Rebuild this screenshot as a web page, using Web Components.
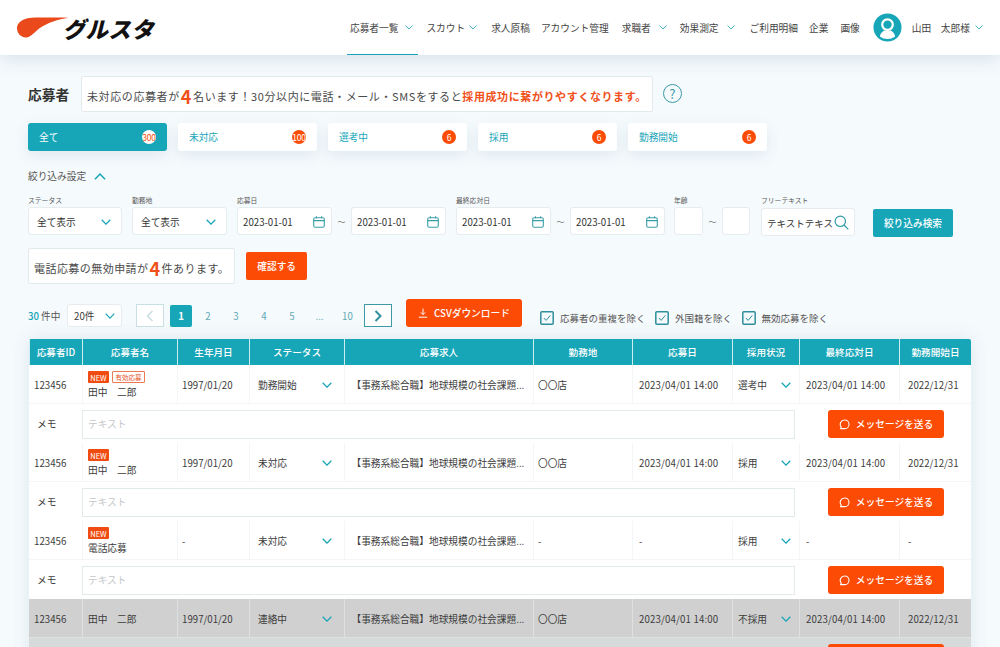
<!DOCTYPE html>
<html lang="ja">
<head>
<meta charset="utf-8">
<title>応募者</title>
<style>
  html, body { margin: 0; height: 647px; overflow: hidden; }
  body {
    background: #f5fafc;
    color: #3c3c3c;
    font-family: "Noto Sans CJK JP", "Noto Sans", sans-serif;
  }
</style>
</head>
<body>
<app-header></app-header>
<applicant-page></applicant-page>

<script>
const TEAL = "#17a5b8";
const ORANGE = "#fb4b05";

const ICONS = {
  chevronDown: (w = 10, sw = 1.4) => `<svg width="${w}" height="${w * 0.6}" viewBox="0 0 10 6" fill="none" stroke="${TEAL}" stroke-width="${sw}" style="flex:none"><path d="M.7.7 5 5.1 9.3.7"/></svg>`,
  chevronUp: () => `<svg width="12" height="7" viewBox="0 0 10 6" fill="none" stroke="${TEAL}" stroke-width="1.3"><path d="M.7 5.3 5 .9l4.3 4.4"/></svg>`,
  calendar: () => `<svg width="12" height="12" viewBox="0 0 12 12" fill="none" stroke="#3a9fa8" stroke-width="1.1" style="flex:none"><rect x=".7" y="1.7" width="10.6" height="9.6" rx="1.6"/><path d="M.7 4.6h10.6M3.4.3v2M8.6.3v2"/></svg>`,
  search: () => `<svg width="15" height="15" viewBox="0 0 15 15" fill="none" stroke="#2f9aa3" stroke-width="1.2" style="flex:none"><circle cx="6.3" cy="6.3" r="5.2"/><path d="m10 10 4.3 4.3"/></svg>`,
  message: () => `<svg width="11" height="11" viewBox="0 0 11 11" fill="none" stroke="#fff" stroke-width="1.1"><path d="M5.6 1a4.3 4.3 0 0 1 .2 8.6H1.6l.7-1.5A4.3 4.3 0 0 1 5.6 1Z"/></svg>`,
  download: () => `<svg width="10" height="10" viewBox="0 0 10 10" fill="none" stroke="#fff" stroke-width="1"><path d="M5 .6v5.8M2.8 4.4 5 6.6l2.2-2.2M.8 9.2h8.4"/></svg>`,
  check: () => `<svg width="14" height="14" viewBox="0 0 14 14" fill="none" style="flex:none"><rect x=".8" y=".8" width="12.4" height="12.4" rx="1" stroke="#2f8f9c" stroke-width="1.5"/><path d="m3.8 7 2.3 2.4 4.2-5" stroke="#2f8f9c" stroke-width="1"/></svg>`,
  avatar: () => `<svg width="29" height="29" viewBox="0 0 29 29"><circle cx="14.5" cy="14.5" r="14" fill="${TEAL}"/><circle cx="14.5" cy="11.6" r="5.3" fill="none" stroke="#fff" stroke-width="2.2"/><path d="M6.8 23.4c.7-3.8 3.3-5.8 5.2-6 1.5.8 3.6.8 5 0 2 .2 4.5 2.2 5.2 6a13 13 0 0 1-15.4 0Z" fill="#fff"/></svg>`,
};

class NavItem extends HTMLElement {
  connectedCallback() {
    if (this.shadowRoot) return;
    const chev = this.hasAttribute("chevron");
    const root = this.attachShadow({ mode: "open" });
    root.innerHTML = `
      <style>
        :host { display: inline-flex; align-items: center; height: 55px; gap: var(--chev-gap, 8px); font-size: 9.7px; white-space: nowrap; color: #444; position: relative; }
        :host([active])::after { content: ""; position: absolute; left: -3px; right: -5px; bottom: 0; height: 1.5px; background: ${TEAL}; }
      </style>
      <slot></slot>${chev ? ICONS.chevronDown(8, 1) : ""}`;
  }
}

class AppHeader extends HTMLElement {
  connectedCallback() {
    if (this.shadowRoot) return;
    const root = this.attachShadow({ mode: "open" });
    root.innerHTML = `
      <style>
        :host { display: flex; align-items: center; height: 55px; background: #fff; box-shadow: 0 4px 18px rgba(70,110,150,.16); position: relative; padding-left: 17px; }
        .logo { display: flex; align-items: center; width: 333px; position: relative; height: 55px; }
        .logo svg { margin-top: 1px; }
        .word { font-size: 22.5px; font-weight: 900; color: #111; transform: skewX(-14deg); margin-left: -4px; margin-top: 2px; line-height: 1; white-space: nowrap; letter-spacing: .4px; }
        nav { display: flex; align-items: center; }
        .user { display: flex; align-items: center; font-size: 9.7px; color: #444; white-space: nowrap; }
        .user svg:first-child { margin-right: 10px; }
        .user svg:last-child { margin-left: 5px; }
      </style>
      <div class="logo">
        <svg width="52" height="22" viewBox="0 0 52 22"><path d="M51.5.8C40 .6 24 .5 15 .7 6 1 0 5.5 0 11c0 6 5 10 9.5 9.5 4-.5 7-4.5 13-9.3C31 5.5 41 2.6 51.5.8Z" fill="#e9491b"/></svg>
        <span class="word">グルスタ</span>
      </div>
      <nav>
        <nav-item active chevron style="--chev-gap:7px;margin-right:13px">応募者一覧</nav-item>
        <nav-item chevron style="--chev-gap:4px;margin-right:14px">スカウト</nav-item>
        <nav-item style="margin-right:11px">求人原稿</nav-item>
        <nav-item style="margin-right:13px">アカウント管理</nav-item>
        <nav-item chevron style="margin-right:13px">求職者</nav-item>
        <nav-item chevron style="margin-right:15px">効果測定</nav-item>
        <nav-item style="margin-right:11px">ご利用明細</nav-item>
        <nav-item style="margin-right:12px">企業</nav-item>
        <nav-item style="margin-right:13px">画像</nav-item>
      </nav>
      <div class="user">${ICONS.avatar()}山田　太郎様${ICONS.chevronDown(8, 1)}</div>`;
  }
}

class NoticeBox extends HTMLElement {
  connectedCallback() {
    if (this.shadowRoot) return;
    const root = this.attachShadow({ mode: "open" });
    root.innerHTML = `
      <style>
        :host { display: inline-flex; align-items: center; height: 36px; box-sizing: border-box; padding: 3px 5px 0; background: #fff; border: 1px solid #e3eaee; border-radius: 2px; font-size: 11px; letter-spacing: var(--track, .45px); white-space: nowrap; color: #4a4a4a; }
      </style>
      <slot></slot>`;
  }
}

class StatusTab extends HTMLElement {
  connectedCallback() {
    if (this.shadowRoot) return;
    const root = this.attachShadow({ mode: "open" });
    root.innerHTML = `
      <style>
        :host { display: flex; align-items: center; justify-content: space-between; width: 139px; height: 28px; box-sizing: border-box; padding: 0 11px; border-radius: 3px; background: #fff; color: ${TEAL}; font-size: 9.7px; box-shadow: 0 5px 14px rgba(90,130,170,.13); }
        :host([active]) { background: ${TEAL}; color: #fff; }
        .count { display: flex; align-items: center; justify-content: center; width: 14px; height: 14px; border-radius: 50%; background: ${ORANGE}; color: #fff; font-size: 8.5px; letter-spacing: -.3px; overflow: hidden; white-space: nowrap; }
        :host([active]) .count { background: #fff; color: ${ORANGE}; }
      </style>
      <slot></slot><span class="count">${this.getAttribute("count")}</span>`;
  }
}

class FilterBox extends HTMLElement {
  connectedCallback() {
    if (this.shadowRoot) return;
    const type = this.getAttribute("type") || "empty";
    const icon = { select: ICONS.chevronDown(10, 1.3), date: ICONS.calendar(), search: ICONS.search(), empty: "" }[type];
    const root = this.attachShadow({ mode: "open" });
    root.innerHTML = `
      <style>
        :host { display: flex; flex-direction: column; width: var(--w, 95px); flex: none; }
        label { height: 14px; font-size: 6.8px; line-height: 14px; color: #555; white-space: nowrap; }
        .box { display: flex; align-items: center; justify-content: space-between; height: 28px; box-sizing: border-box; background: #fff; border: 1px solid #e6ecef; border-radius: 3px; font-size: 9.7px; color: #333; white-space: nowrap; overflow: hidden; padding: 1px 6px 0 5px; }
        :host([type="select"]) .box { padding-left: 8px; padding-right: 10px; }
        :host([type="search"]) .box { padding: 1px 5px 0 5px; margin-top: 1px; font-size: 9.5px; }
        :host([type="search"]) .box span { overflow: hidden; }
      </style>
      <label>${this.getAttribute("label") || "&nbsp;"}</label>
      <div class="box"><span><slot></slot></span>${icon}</div>`;
  }
}

class RangeSep extends HTMLElement {
  connectedCallback() {
    if (this.shadowRoot) return;
    const root = this.attachShadow({ mode: "open" });
    root.innerHTML = `
      <style>:host { display: flex; align-items: center; justify-content: center; width: 19px; height: 28px; margin-top: 14px; font-size: 8px; color: #777; flex: none; }</style>～`;
  }
}

class FilterBar extends HTMLElement {
  connectedCallback() {
    if (this.shadowRoot) return;
    const root = this.attachShadow({ mode: "open" });
    root.innerHTML = `
      <style>
        :host { display: flex; align-items: flex-start; margin-top: 10px; }
        .group { display: flex; margin-right: 10px; flex: none; }
        .btn { display: flex; align-items: center; justify-content: center; width: 80px; height: 28px; margin: 16px 0 0 18px; background: ${TEAL}; border-radius: 2px; color: #fff; font-size: 9.7px; font-weight: 500; flex: none; }
      </style>
      <div class="group"><filter-box type="select" label="ステータス" style="--w:94px">全て表示</filter-box></div>
      <div class="group"><filter-box type="select" label="勤務地">全て表示</filter-box></div>
      <div class="group"><filter-box type="date" label="応募日">2023-01-01</filter-box><range-sep></range-sep><filter-box type="date">2023-01-01</filter-box></div>
      <div class="group" style="margin-right:9px"><filter-box type="date" label="最終応対日">2023-01-01</filter-box><range-sep></range-sep><filter-box type="date">2023-01-01</filter-box></div>
      <div class="group" style="margin-right:11px"><filter-box label="年齢" style="--w:29px"></filter-box><range-sep></range-sep><filter-box style="--w:28px"></filter-box></div>
      <filter-box type="search" label="フリーテキスト" style="--w:94px">テキストテキス</filter-box>
      <div class="btn">絞り込み検索</div>`;
  }
}

class PagerBar extends HTMLElement {
  connectedCallback() {
    if (this.shadowRoot) return;
    const root = this.attachShadow({ mode: "open" });
    const pageLink = (t, w) => `<span class="num" style="width:${w}px">${t}</span>`;
    const checks = ["応募者の重複を除く", "外国籍を除く", "無効応募を除く"]
      .map((t) => `<span class="check">${ICONS.check()}<span>${t}</span></span>`).join("");
    root.innerHTML = `
      <style>
        :host { display: flex; align-items: flex-end; height: 28px; margin-top: 15px; font-size: 9.7px; }
        .count { display: flex; align-items: center; height: 23px; width: 39px; white-space: nowrap; color: #555; flex: none; }
        .count b { color: ${TEAL}; font-weight: 500; margin-right: 2px; }
        .sel { display: flex; align-items: center; justify-content: space-between; width: 55px; height: 23px; box-sizing: border-box; padding: 0 6px; background: #fff; border: 1px solid #e6ecef; border-radius: 3px; flex: none; margin-right: 14px; }
        .arrow { display: flex; align-items: center; justify-content: center; width: 28px; height: 23px; box-sizing: border-box; background: #fff; border: 1px solid #c9dfe3; flex: none; }
        .arrow.next { border-color: #3b9aa5; }
        .cur { display: flex; align-items: center; justify-content: center; width: 22px; height: 22px; margin: 0 0 0 6px; background: ${TEAL}; color: #fff; border-radius: 2px; font-weight: 700; flex: none; }
        .num { display: flex; align-items: center; justify-content: center; height: 23px; color: #5fa9b4; flex: none; }
        .csv { display: flex; align-items: center; justify-content: center; gap: 6px; width: 116px; height: 28px; margin: 0 18px 0 14px; background: ${ORANGE}; color: #fff; border-radius: 3px; font-size: 9.7px; font-weight: 500; flex: none; }
        .check { display: inline-flex; align-items: center; gap: 6px; height: 23px; margin-right: 9.5px; margin-bottom: -2px; font-size: 9.5px; white-space: nowrap; color: #555; flex: none; }
      </style>
      <span class="count"><b>30</b>件中</span>
      <span class="sel">20件${ICONS.chevronDown(10, 1.2)}</span>
      <span class="arrow"><svg width="8" height="12" viewBox="0 0 8 12" fill="none" stroke="#c8dde1" stroke-width="1.5"><path d="M6.5 1 1.5 6l5 5"/></svg></span>
      <span class="cur">1</span>
      <span style="width:2px"></span>
      ${pageLink("2", 28)}${pageLink("3", 28)}${pageLink("4", 28)}${pageLink("5", 28)}${pageLink("...", 27)}${pageLink("10", 29)}
      <span style="width:2px"></span>
      <span class="arrow next"><svg width="8" height="12" viewBox="0 0 8 12" fill="none" stroke="#2f8f9c" stroke-width="2"><path d="m1.5 1 5 5-5 5"/></svg></span>
      <span class="csv">${ICONS.download()}CSVダウンロード</span>
      ${checks}`;
  }
}

const COLUMNS = "53px 95px 72px 95px 189px 99px 100px 67px 100px 72px";

class TableHead extends HTMLElement {
  connectedCallback() {
    if (this.shadowRoot) return;
    const names = ["応募者ID", "応募者名", "生年月日", "ステータス", "応募求人", "勤務地", "応募日", "採用状況", "最終応対日", "勤務開始日"];
    const root = this.attachShadow({ mode: "open" });
    root.innerHTML = `
      <style>
        :host { display: grid; grid-template-columns: ${COLUMNS}; height: 26px; background: ${TEAL}; border-radius: 2px 2px 0 0; color: #fff; font-size: 9.6px; font-weight: 500; }
        div { display: flex; align-items: center; justify-content: center; border-left: 1px solid #cdeef2; white-space: nowrap; }
        div:first-child { border-left: 0; padding-right: 2px; }
      </style>
      ${names.map((n) => `<div>${n}</div>`).join("")}`;
  }
}

class ApplicantRow extends HTMLElement {
  connectedCallback() {
    if (this.shadowRoot) return;
    const d = JSON.parse(this.getAttribute("data"));
    const tags = (d.tags || []).map((t) => `<span class="tag ${t === "NEW" ? "new" : "line"}">${t}</span>`).join("");
    const root = this.attachShadow({ mode: "open" });
    root.innerHTML = `
      <style>
        :host { display: block; font-size: 9.7px; color: #3c3c3c; }
        .main { display: grid; grid-template-columns: ${COLUMNS}; height: 39px; }
        .main > div { display: flex; align-items: center; justify-content: space-between; box-sizing: border-box; padding: 1px 4px 0; border-left: 1px solid #f3f5f6; border-bottom: 1px solid #f3f5f6; white-space: nowrap; min-width: 0; }
        .main > div:first-child { border-left: 0; padding-left: 5px; }
        .main > .name { flex-direction: column; align-items: flex-start; justify-content: center; padding-left: 5px; }
        .tags { display: flex; gap: 3px; height: 12px; margin-bottom: 3px; }
        .tag { display: flex; align-items: center; justify-content: center; height: 12px; box-sizing: border-box; border-radius: 1px; }
        .tag.new { width: 21px; background: #f04c12; color: #fff; font-size: 7.5px; }
        .tag.line { width: 33px; border: 1px solid #ee7a54; color: #e8582a; font-size: 6.5px; }
        .name-text { line-height: 12px; }
        .main > .pad { padding-left: 8px; padding-right: 12px; }
        .main > .job { padding-left: 6.5px; padding-right: 0; }
        .main > .stamp { padding-left: 6px; letter-spacing: .15px; }
        .main > .hire { padding-left: 5px; padding-right: 8px; }
        .memo { display: flex; align-items: center; height: 39px; box-sizing: border-box; padding-top: 1px; }
        .memo .label { width: 53px; padding-left: 8px; box-sizing: border-box; flex: none; }
        .memo .input { display: flex; align-items: center; width: 713px; height: 29px; box-sizing: border-box; padding-left: 5px; background: #fff; border: 1px solid #e3ebe8; color: #c4c8ca; flex: none; }
        .memo .send { display: flex; align-items: center; justify-content: center; gap: 6px; width: 116px; height: 28px; margin-left: 33px; background: ${ORANGE}; color: #fff; border-radius: 3px; font-weight: 500; flex: none; }
        :host([muted]) .main { background: #d0d0d0; }
        :host([muted]) .main > div { border-color: #dfe1e1; }
        :host([muted]) .memo { background: #d6dada; }
        :host([muted]) .memo .input { background: #d6dada; border-color: #d6dada; color: transparent; }
      </style>
      <div class="main">
        <div>${d.id}</div>
        <div class="name">${tags ? `<span class="tags">${tags}</span>` : ""}<span class="name-text">${d.name}</span></div>
        <div>${d.birth}</div>
        <div class="pad">${d.status}${ICONS.chevronDown(10, 1.3)}</div>
        <div class="job">【事務系総合職】地球規模の社会課題...</div>
        <div>${d.place}</div>
        <div class="stamp">${d.applied}</div>
        <div class="hire">${d.hire}${ICONS.chevronDown(10, 1.3)}</div>
        <div class="stamp">${d.last}</div>
        <div class="pad">${d.start}</div>
      </div>
      <div class="memo">
        <span class="label">メモ</span>
        <span class="input">テキスト</span>
        <span class="send">${ICONS.message()}メッセージを送る</span>
      </div>`;
  }
}

class ApplicantPage extends HTMLElement {
  connectedCallback() {
    if (this.shadowRoot) return;
    const base = { id: "123456", name: "田中　二郎", birth: "1997/01/20", place: "〇〇店", applied: "2023/04/01 14:00", last: "2023/04/01 14:00", start: "2022/12/31" };
    const rows = [
      { ...base, tags: ["NEW", "有効応募"], status: "勤務開始", hire: "選考中" },
      { ...base, tags: ["NEW"], status: "未対応", hire: "採用" },
      { id: "123456", tags: ["NEW"], name: "電話応募", birth: "-", status: "未対応", place: "-", applied: "-", hire: "採用", last: "-", start: "-" },
      { ...base, status: "連絡中", hire: "不採用", muted: true },
    ];
    const root = this.attachShadow({ mode: "open" });
    root.innerHTML = `
      <style>
        :host { display: block; padding: 21px 29px 0 28px; }
        .title { display: flex; align-items: center; height: 36px; }
        h1 { margin: 0 12px 0 0; font-size: 13.7px; font-weight: 700; color: #333; width: 41px; white-space: nowrap; }
        .big { color: #f0501a; font-size: 18px; font-weight: 700; line-height: 1; margin: 0 1px; }
        .hot { color: #f0501a; font-weight: 700; }
        .help { display: flex; align-items: center; justify-content: center; width: 17px; height: 17px; margin-left: 10px; margin-top: -1px; border: 1.3px solid #3a9aa5; border-radius: 50%; color: #3a9aa5; font-size: 13px; line-height: 1; }
        .tabs { display: flex; gap: 11px; margin-top: 11px; }
        .toggle { display: flex; align-items: center; gap: 8px; height: 14px; margin-top: 18px; font-size: 9.7px; color: #555; }
        .alert { display: flex; align-items: center; gap: 11px; margin-top: 11px; }
        .confirm { display: flex; align-items: center; justify-content: center; width: 61px; height: 28px; background: ${ORANGE}; color: #fff; border-radius: 2px; font-size: 9.7px; font-weight: 500; }
        .table { width: 942px; margin: 12px 0 0 1px; background: #fff; box-shadow: 0 0 16px rgba(90,130,170,.15); }
      </style>
      <div class="title">
        <h1>応募者</h1>
        <notice-box style="--track:.6px">未対応の応募者が<span class="big">4</span>名います！30分以内に電話・メール・SMSをすると<span class="hot">採用成功に繋がりやすくなります。</span></notice-box>
        <span class="help">?</span>
      </div>
      <div class="tabs">
        <status-tab active count="300">全て</status-tab>
        <status-tab count="100">未対応</status-tab>
        <status-tab count="6">選考中</status-tab>
        <status-tab count="6">採用</status-tab>
        <status-tab count="6">勤務開始</status-tab>
      </div>
      <div class="toggle">絞り込み設定${ICONS.chevronUp()}</div>
      <filter-bar></filter-bar>
      <div class="alert">
        <notice-box>電話応募の無効申請が<span class="big">4</span>件あります。</notice-box>
        <span class="confirm">確認する</span>
      </div>
      <pager-bar></pager-bar>
      <div class="table">
        <table-head></table-head>
        <div id="rows"></div>
      </div>`;
    const holder = root.getElementById("rows");
    rows.forEach((r) => {
      const row = document.createElement("applicant-row");
      row.setAttribute("data", JSON.stringify(r));
      if (r.muted) row.setAttribute("muted", "");
      holder.appendChild(row);
    });
  }
}

customElements.define("nav-item", NavItem);
customElements.define("app-header", AppHeader);
customElements.define("notice-box", NoticeBox);
customElements.define("status-tab", StatusTab);
customElements.define("filter-box", FilterBox);
customElements.define("range-sep", RangeSep);
customElements.define("filter-bar", FilterBar);
customElements.define("pager-bar", PagerBar);
customElements.define("table-head", TableHead);
customElements.define("applicant-row", ApplicantRow);
customElements.define("applicant-page", ApplicantPage);
</script>
</body>
</html>
